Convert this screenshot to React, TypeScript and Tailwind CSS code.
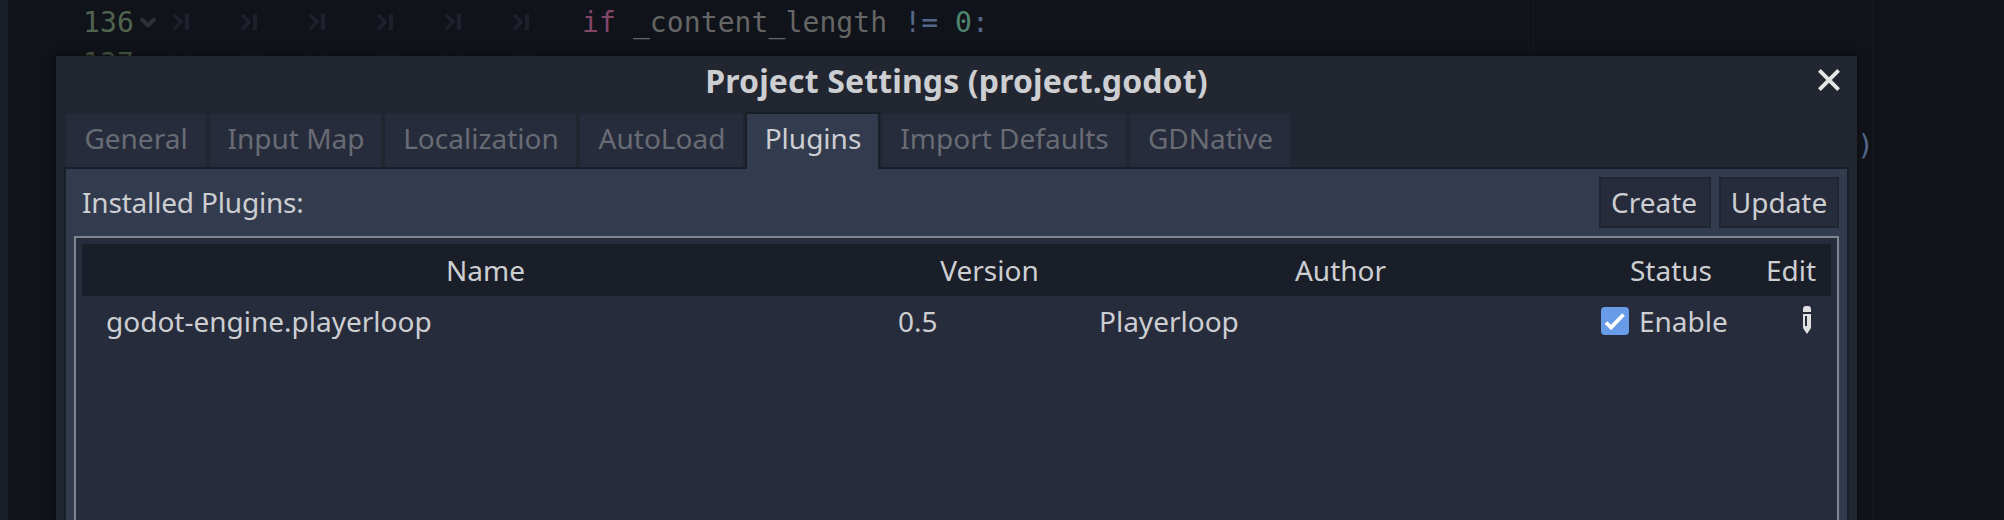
import React from 'react';

const noto = "font-['Noto_Sans',sans-serif]";

function TabMark() {
  return (
    <svg width="16" height="18" viewBox="0 0 16 18" fill="none" stroke="#1e212b" className="shrink-0">
      <path d="M2 3 L8 9 L2 15" strokeWidth="3.8" strokeLinecap="round" strokeLinejoin="round" />
      <path d="M14 1 V17" strokeWidth="4" />
    </svg>
  );
}

function CodeLine({ number, fold, children }: { number: string; fold?: boolean; children?: React.ReactNode }) {
  return (
    <div className="flex h-[41px] items-center pl-[83px] whitespace-pre">
      <span className="w-[57px] text-[#50644f]">{number}</span>
      <span className="flex w-[33px] items-center">
        {fold && (
          <svg width="16" height="12" viewBox="0 0 16 12" fill="none" stroke="#2f3033" strokeWidth="4" strokeLinecap="round" strokeLinejoin="round">
            <path d="M2 3.5 L8 9.5 L14 3.5" />
          </svg>
        )}
      </span>
      <span className="flex w-[409px] gap-[52px]">
        {[0, 1, 2, 3, 4, 5].map((i) => (
          <TabMark key={i} />
        ))}
      </span>
      {children}
    </div>
  );
}

const tabs = [
  { label: 'General', width: 'w-[140px]' },
  { label: 'Input Map', width: 'w-[171px] pl-px' },
  { label: 'Localization', width: 'w-[191px] pl-px' },
  { label: 'AutoLoad', width: 'w-[163px] pl-px' },
  { label: 'Plugins', width: 'w-[135px]', active: true },
  { label: 'Import Defaults', width: 'w-[244px] pl-px' },
  { label: 'GDNative', width: 'w-[160px] pl-px' },
];

function Tabs() {
  return (
    <div className="flex h-[57px] pl-[10px]">
      {tabs.map((t) =>
        t.active ? (
          <div
            key={t.label}
            className="z-10 -ml-[2px] mr-[2px] flex h-[57px] w-[135px] justify-center border-x-2 border-t-2 border-[#1a1e28] bg-[#333b4f] pt-[5px] pl-px text-[#cdced2]"
          >
            {t.label}
          </div>
        ) : (
          <div
            key={t.label}
            className={`mt-[2px] mr-[4px] flex h-[53px] justify-center bg-[#262c3b] pt-[5px] text-[#696b74] ${t.width}`}
          >
            {t.label}
          </div>
        ),
      )}
    </div>
  );
}

function Button({ label, width }: { label: string; width: string }) {
  return (
    <button className={`flex h-[51px] justify-center border-2 border-[#212531] bg-[#262c3b] pt-[4px] ${width}`}>
      {label}
    </button>
  );
}

function Dialog() {
  return (
    <div className={`absolute top-[56px] left-[56px] h-[600px] w-[1801px] bg-[#222630] text-[28px] leading-[38px] tracking-normal text-[#cdced2] shadow-[0_0_7px_1px_rgba(15,13,12,0.9)] ${noto}`}>
      <div className="relative flex h-[56px] justify-center pt-[3px] text-[32px] leading-[44px] font-bold tracking-[0.13px]">
        Project Settings (project.godot)
        <svg className="absolute top-[13px] right-[17px]" width="22" height="22" viewBox="0 0 22 22" stroke="#e6e6e6" strokeWidth="3.9">
          <path d="M1.4 1.4 L20.6 20.6 M20.6 1.4 L1.4 20.6" />
        </svg>
      </div>
      <Tabs />
      <div className="-mt-[2px] ml-[8px] h-[500px] w-[1785px] border-2 border-[#1a1e28] bg-[#333b4f] px-[8px] pt-[8px]">
        <div className="flex h-[59px] gap-[8px]">
          <span className="flex-1 pt-[6px] pl-[8px] tracking-[-0.18px]">Installed Plugins:</span>
          <Button label="Create" width="w-[112px] pr-[2px]" />
          <Button label="Update" width="w-[120px]" />
        </div>
        <div className="h-[420px] border-2 border-[#80858f] bg-[#262c3b] p-[6px]">
          <div className="flex h-[52px] items-center bg-[#1a1e28] text-center">
            <span className="w-[807px]">Name</span>
            <span className="w-[201px]">Version</span>
            <span className="w-[501px]">Author</span>
            <span className="w-[160px]">Status</span>
            <span className="w-[80px]">Edit</span>
          </div>
          <div className="flex h-[50px] items-center">
            <span className="w-[816px] pl-[24px]">godot-engine.playerloop</span>
            <span className="w-[201px]">0.5</span>
            <span className="w-[502px]">Playerloop</span>
            <svg width="28" height="28" viewBox="0 0 28 28">
              <rect width="28" height="28" rx="4" fill="#699ce8" />
              <path d="M5 15.5 L10 20.5 L22.5 7.5" fill="none" stroke="#fff" strokeWidth="3.8" />
            </svg>
            <span className="w-[174px] pl-[10px]">Enable</span>
            <svg className="-mt-[2px]" width="8" height="28" viewBox="0 0 8 28" fill="#e0e0e0">
              <path d="M0 6 V3 Q0 0 3 0 H5 Q8 0 8 3 V6 Z" />
              <path fillRule="evenodd" d="M0 8 H8 V22 L4 28 L0 22 Z M2 10 V20 H4 V10 Z" />
            </svg>
          </div>
        </div>
      </div>
    </div>
  );
}

export default function App() {
  return (
    <div className="relative flex h-[520px] w-[2004px] overflow-hidden bg-[#10131a] font-['DejaVu_Sans_Mono',monospace] text-[28px] leading-[41px] tracking-[0.1px]">
      <div className="w-[8px] bg-[#1a1e28]" />
      <div className="-ml-[8px] w-[1534px] shrink-0 border-r border-[#151821] pt-[1.5px]">
        <CodeLine number="136" fold>
          <span className="text-[#834666]">if</span>
          <span className="text-[#666666]"> _content_length </span>
          <span className="text-[#556789]">!= </span>
          <span className="text-[#518573]">0</span>
          <span className="text-[#556789]">:</span>
        </CodeLine>
        <CodeLine number="137" />
      </div>
      <div className="flex w-[340px] justify-end border-r border-[#1a1d26] pt-[125px] text-[#556789]">
        <span className="-mr-px">)</span>
      </div>
      <Dialog />
    </div>
  );
}
